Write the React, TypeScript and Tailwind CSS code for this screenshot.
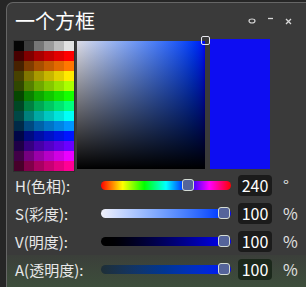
import React from 'react';

const hues = [0, 28, 55, 80, 115, 150, 178, 205, 235, 265, 295, 325];
const levels = [0.28, 0.5, 0.66, 0.78, 0.89, 1];
const grays = ['#050505', '#3c3c3c', '#767676', '#9a9a9a', '#bcbcbc', '#e2e2e2'];

const hsv = (h: number, v: number) => {
  const f = (n: number) => {
    const k = (n + h / 60) % 6;
    return Math.round(255 * (v - v * Math.max(0, Math.min(k, 4 - k, 1))));
  };
  return `rgb(${f(5)},${f(3)},${f(1)})`;
};

const Palette = () => (
  <div className="border border-[#2e2e2e] mt-[1px]">
    <div className="grid grid-cols-6">
      {grays.map((c) => (
        <div key={c} className="w-[10px] h-[10px]" style={{ background: c }} />
      ))}
      {hues.map((h) =>
        levels.map((v) => (
          <div key={`${h}-${v}`} className="w-[10px] h-[10px]" style={{ background: hsv(h, v) }} />
        ))
      )}
    </div>
  </div>
);

interface SliderRowProps {
  label: string;
  value: number;
  unit: string;
  pct: number;
  barClass: string;
  boxClass?: string;
}

const SliderRow: React.FC<SliderRowProps> = ({ label, value, unit, pct, barClass, boxClass }) => (
  <div className="flex items-center h-[28px] pl-[8px]">
    <div className="w-[86px] text-[15px] leading-none text-[#e8e8e8]">{label}</div>
    <div className={`relative w-[130px] h-[9px] rounded-full ${barClass}`}>
      <div
        className="absolute top-1/2 w-[12px] h-[12px] -translate-x-1/2 -translate-y-1/2 rounded-[3px] border-[1.5px] border-[#d4dcd4] bg-[#55649a]"
        style={{ left: `${Math.min(pct * 130, 123)}px` }}
      />
    </div>
    <div
      className={`ml-[7px] w-[34px] h-[21px] rounded-[4px] flex items-center justify-center text-[16px] text-white ${boxClass ?? 'bg-[#1b1b1b]'}`}
    >
      {value}
    </div>
    <div className="ml-[11px] text-[16px] leading-none text-[#e0e0e0]">{unit}</div>
  </div>
);

export default function App() {
  return (
    <div
      className="w-[306px] h-[287px] bg-[#262626] pt-[2px] pl-[6px] overflow-hidden"
      style={{ fontFamily: '"Noto Sans CJK SC", "Noto Sans", sans-serif' }}
    >
      <div className="h-full rounded-tl-[7px] border-l border-t border-[#666666] bg-[#3a3a3a] flex flex-col">
        <div className="h-[36px] flex items-center justify-between pl-[8px] pr-[14px]">
          <span className="text-[20px] leading-none text-white">一个方框</span>
          <div className="flex items-center gap-[11px] text-[#d8d8d8]">
            <svg width="8" height="6" viewBox="0 0 8 6">
              <ellipse cx="4" cy="3" rx="3" ry="2" fill="none" stroke="currentColor" strokeWidth="1.2" />
            </svg>
            <svg width="7" height="8" viewBox="0 0 7 8">
              <path d="M1 1.5h5" stroke="currentColor" strokeWidth="1.3" />
            </svg>
            <svg width="7" height="7" viewBox="0 0 7 7">
              <path d="M1 1l5 5M6 1l-5 5" stroke="currentColor" strokeWidth="1.3" />
            </svg>
          </div>
        </div>

        <div className="flex items-start pl-[6px] h-[131px]">
          <Palette />
          <div className="relative ml-[2px] mt-[2px] w-[128px] h-[128px] bg-linear-to-r from-[#dcdce6] to-[#0000f6]">
            <div className="absolute inset-0 bg-linear-to-t from-black to-transparent" />
            <div className="absolute left-[124px] -top-[5px] w-[9px] h-[9px] rounded-[2px] border-[1.5px] border-[#e6e6ee]" />
          </div>
          <div className="ml-[5px] w-[60px] h-[130px] bg-[#0d0df2]" />
        </div>

        <div className="mt-[1px]">
          <SliderRow
            label="H(色相):"
            value={240}
            unit="°"
            pct={240 / 360}
            barClass="bg-[linear-gradient(to_right,#f00,#ff0,#0f0,#0ff,#00f,#f0f,#f00)]"
          />
          <SliderRow label="S(彩度):" value={100} unit="%" pct={1} barClass="bg-linear-to-r from-[#f0f0f8] to-[#0000ff]" />
          <SliderRow label="V(明度):" value={100} unit="%" pct={1} barClass="bg-linear-to-r from-black to-[#0000ff]" />
        </div>
        <div className="flex-1 bg-linear-to-b from-[#3b3f3a] to-[#3d4e3b]">
          <SliderRow
            label="A(透明度):"
            value={100}
            unit="%"
            pct={1}
            barClass="bg-linear-to-r from-[#1e2e36] to-[#0000ff]"
            boxClass="bg-[#1b281b]"
          />
        </div>
      </div>
    </div>
  );
}
